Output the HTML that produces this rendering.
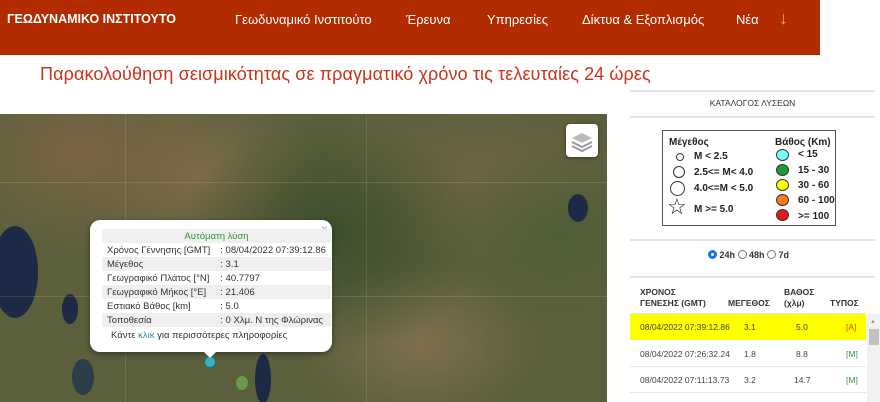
<!DOCTYPE html>
<html><head><meta charset="utf-8"><style>
*{margin:0;padding:0;box-sizing:border-box}
body{width:880px;height:402px;overflow:hidden;background:#fff;font-family:"Liberation Sans",sans-serif;position:relative}
.hdr{position:absolute;left:0;top:0;width:820px;height:55px;background:#b22c00;color:#fff}
.hdr span{position:absolute;top:12px;font-size:13px}
.title{position:absolute;left:40px;top:64px;color:#c9331a;font-size:18px;letter-spacing:0.1px}
.map{position:absolute;left:0;top:114px;width:607px;height:288px;overflow:hidden;
background:
radial-gradient(ellipse 120px 90px at 560px 120px,#4f5e36 0,transparent 100%),
radial-gradient(ellipse 150px 120px at 330px 120px,#3d4f2c 0,transparent 100%),
radial-gradient(ellipse 120px 80px at 420px 230px,#7f7050 0,transparent 100%),
radial-gradient(ellipse 140px 100px at 80px 40px,#7a6544 0,transparent 100%),
radial-gradient(ellipse 120px 90px at 200px 60px,#7d6c4a 0,transparent 100%),
radial-gradient(ellipse 160px 90px at 480px 60px,#6e6443 0,transparent 100%),
#5b5f3c}
.lake{position:absolute;background:#1c2a45;border-radius:50%}
.popup{position:absolute;left:90px;top:220px;width:242px;height:132px;background:#fff;border-radius:10px;box-shadow:0 2px 6px rgba(0,0,0,.4);font-size:9.5px;color:#333}
.popup table{position:absolute;left:12px;top:9px;width:217px;border-collapse:collapse}
.popup td{height:14px;padding:0 5px;white-space:nowrap}
.popup tr:nth-child(odd) td{background:#efefef}
.tip{position:absolute;left:203px;top:351px;width:0;height:0;border-left:7px solid transparent;border-right:7px solid transparent;border-top:7px solid #fff}
.right{position:absolute;left:630px;top:0;width:250px;height:402px}
.line{position:absolute;left:0;width:245px;height:2px;background:#e3e4e8}
.legend{position:absolute;left:32px;top:130px;width:174px;height:96px;border:1.5px solid #555;font-size:10px;font-weight:bold;color:#222}
.legend div{position:absolute;white-space:nowrap}
.c{border:1px solid #333;border-radius:50%}
.row{position:absolute;left:0;width:236px;height:26px;font-size:8.5px;color:#444}
.row span{position:absolute;top:8px}
.hd{position:absolute;font-size:8.5px;font-weight:bold;color:#333;line-height:11px}
</style></head><body>
<div class="hdr">
<span style="left:7px;font-weight:bold;font-size:12.5px;top:12px">ΓΕΩΔΥΝΑΜΙΚΟ ΙΝΣΤΙΤΟΥΤΟ</span>
<span style="left:235px">Γεωδυναμικό Ινστιτούτο</span>
<span style="left:406px">Έρευνα</span>
<span style="left:487px">Υπηρεσίες</span>
<span style="left:582px">Δίκτυα &amp; Εξοπλισμός</span>
<span style="left:736px">Νέα</span>
<span style="left:779px;top:8px;font-size:18px;color:#f0a080">↓</span>
</div>
<div class="title">Παρακολούθηση σεισμικότητας σε πραγματικό χρόνο τις τελευταίες 24 ώρες</div>
<div class="map">
<div class="lake" style="left:-8px;top:112px;width:46px;height:92px"></div>
<div class="lake" style="left:568px;top:80px;width:20px;height:28px"></div>
<div class="lake" style="left:62px;top:180px;width:16px;height:30px"></div>
<div class="lake" style="left:72px;top:245px;width:22px;height:36px;background:#2a3d48"></div>
<div class="lake" style="left:255px;top:240px;width:16px;height:50px"></div>
<div style="position:absolute;left:236px;top:262px;width:12px;height:14px;border-radius:50%;background:#6a9a4a"></div>
<div style="position:absolute;left:0;top:68px;width:607px;height:1px;background:rgba(255,255,255,.12)"></div>
<div style="position:absolute;left:0;top:182px;width:607px;height:1px;background:rgba(255,255,255,.12)"></div>
<div style="position:absolute;left:125px;top:0;width:1px;height:288px;background:rgba(255,255,255,.12)"></div>
<div style="position:absolute;left:366px;top:0;width:1px;height:288px;background:rgba(255,255,255,.1)"></div>
<div style="position:absolute;left:566px;top:10px;width:32px;height:33px;background:#fff;border-radius:4px;box-shadow:0 1px 4px rgba(0,0,0,.4)">
<svg width="32" height="33" viewBox="0 0 32 33"><path d="M16 9 L26 14 L16 19 L6 14Z" fill="#bbb"/><path d="M6 18 L16 23 L26 18" stroke="#999" fill="none" stroke-width="2"/><path d="M6 22 L16 27 L26 22" stroke="#999" fill="none" stroke-width="2"/></svg></div>
<div style="position:absolute;left:204px;top:242px;width:12px;height:12px;border-radius:50%;background:#3ab0c0;border:1px solid #1a7080"></div>
</div>
<div class="popup">
<div style="position:absolute;right:4px;top:2px;color:#aaa;font-size:12px">×</div>
<table>
<tr><td colspan="2" style="text-align:center;color:#2a9a2a">Αυτόματη λύση</td></tr>
<tr><td>Χρόνος Γέννησης [GMT]</td><td>: 08/04/2022 07:39:12.86</td></tr>
<tr><td>Μέγεθος</td><td>: 3.1</td></tr>
<tr><td>Γεωγραφικό Πλάτος [°N]</td><td>: 40.7797</td></tr>
<tr><td>Γεωγραφικό Μήκος [°E]</td><td>: 21.406</td></tr>
<tr><td>Εστιακό Βάθος [km]</td><td>: 5.0</td></tr>
<tr><td>Τοποθεσία</td><td>: 0 Χλμ. Ν της Φλώρινας</td></tr>
</table>
<div style="position:absolute;left:21px;top:110px">Κάντε <span style="color:#2a8ab0">κλικ</span> για περισσότερες πληροφορίες</div>
</div>
<div class="tip"></div>
<div class="right">
<div class="line" style="top:90px"></div>
<div style="position:absolute;left:0;width:245px;top:98px;text-align:center;font-size:8.5px;color:#333">ΚΑΤΑΛΟΓΟΣ ΛΥΣΕΩΝ</div>
<div class="line" style="top:116px"></div>
<div class="legend">
<div style="left:6px;top:6px">Μέγεθος</div>
<div class="c" style="left:13px;top:22px;width:8px;height:8px"></div><div style="left:31px;top:20px">M &lt; 2.5</div>
<div class="c" style="left:10px;top:35px;width:12px;height:12px"></div><div style="left:31px;top:36px">2.5&lt;= M&lt; 4.0</div>
<div class="c" style="left:7px;top:50px;width:15px;height:15px"></div><div style="left:31px;top:52px">4.0&lt;=M &lt; 5.0</div>
<div style="left:4px;top:65px;font-size:22px;font-weight:normal;line-height:22px">☆</div><div style="left:31px;top:73px">M &gt;= 5.0</div>
<div style="left:112px;top:6px">Βάθος (Km)</div>
<div class="c" style="left:113px;top:18px;width:13px;height:12px;background:#7ff"></div><div style="left:135px;top:18px">&lt; 15</div>
<div class="c" style="left:113px;top:33px;width:13px;height:12px;background:#1a9a3a"></div><div style="left:135px;top:34px">15 - 30</div>
<div class="c" style="left:113px;top:48px;width:13px;height:12px;background:#ff0"></div><div style="left:135px;top:49px">30 - 60</div>
<div class="c" style="left:113px;top:63px;width:13px;height:12px;background:#f97a1a"></div><div style="left:135px;top:64px">60 - 100</div>
<div class="c" style="left:113px;top:78px;width:13px;height:12px;background:#e41a1a"></div><div style="left:135px;top:80px">&gt;= 100</div>
</div>
<div class="line" style="top:239px"></div>
<div style="position:absolute;left:78px;top:250px;font-size:9px;color:#333;font-weight:bold">
<span style="display:inline-block;width:9px;height:9px;border-radius:50%;border:3px solid #1a73e8;vertical-align:-1px"></span> 24h <span style="display:inline-block;width:9px;height:9px;border-radius:50%;border:1px solid #777;vertical-align:-1px"></span> 48h <span style="display:inline-block;width:9px;height:9px;border-radius:50%;border:1px solid #777;vertical-align:-1px"></span> 7d</div>
<div class="line" style="top:276px"></div>
<div class="hd" style="left:10px;top:287px">ΧΡΟΝΟΣ<br>ΓΕΝΕΣΗΣ (GMT)</div>
<div class="hd" style="left:98px;top:298px">ΜΕΓΕΘΟΣ</div>
<div class="hd" style="left:154px;top:287px">ΒΑΘΟΣ<br>(χλμ)</div>
<div class="hd" style="left:200px;top:298px">ΤΥΠΟΣ</div>
<div class="line" style="top:313px;width:236px;height:1px"></div>
<div class="row" style="top:314px;background:#ff0"><span style="left:10px">08/04/2022 07:39:12.86</span><span style="left:114px">3.1</span><span style="left:166px">5.0</span><span style="left:216px;color:#e04a00">[A]</span></div>
<div class="row" style="top:341px;border-bottom:1px solid #e6e6e6"><span style="left:10px">08/04/2022 07:26:32.24</span><span style="left:114px">1.8</span><span style="left:166px">8.8</span><span style="left:216px;color:#3a9a3a">[M]</span></div>
<div class="row" style="top:367px;border-bottom:1px solid #e6e6e6"><span style="left:10px">08/04/2022 07:11:13.73</span><span style="left:114px">3.2</span><span style="left:164px">14.7</span><span style="left:216px;color:#3a9a3a">[M]</span></div>
<div style="position:absolute;left:237px;top:314px;width:13px;height:88px;background:#f1f1f1"></div>
<div style="position:absolute;left:240px;top:319px;font-size:6px;color:#999">▲</div>
<div style="position:absolute;left:239px;top:329px;width:10px;height:16px;background:#c1c1c1"></div>
</div>
</body></html>
